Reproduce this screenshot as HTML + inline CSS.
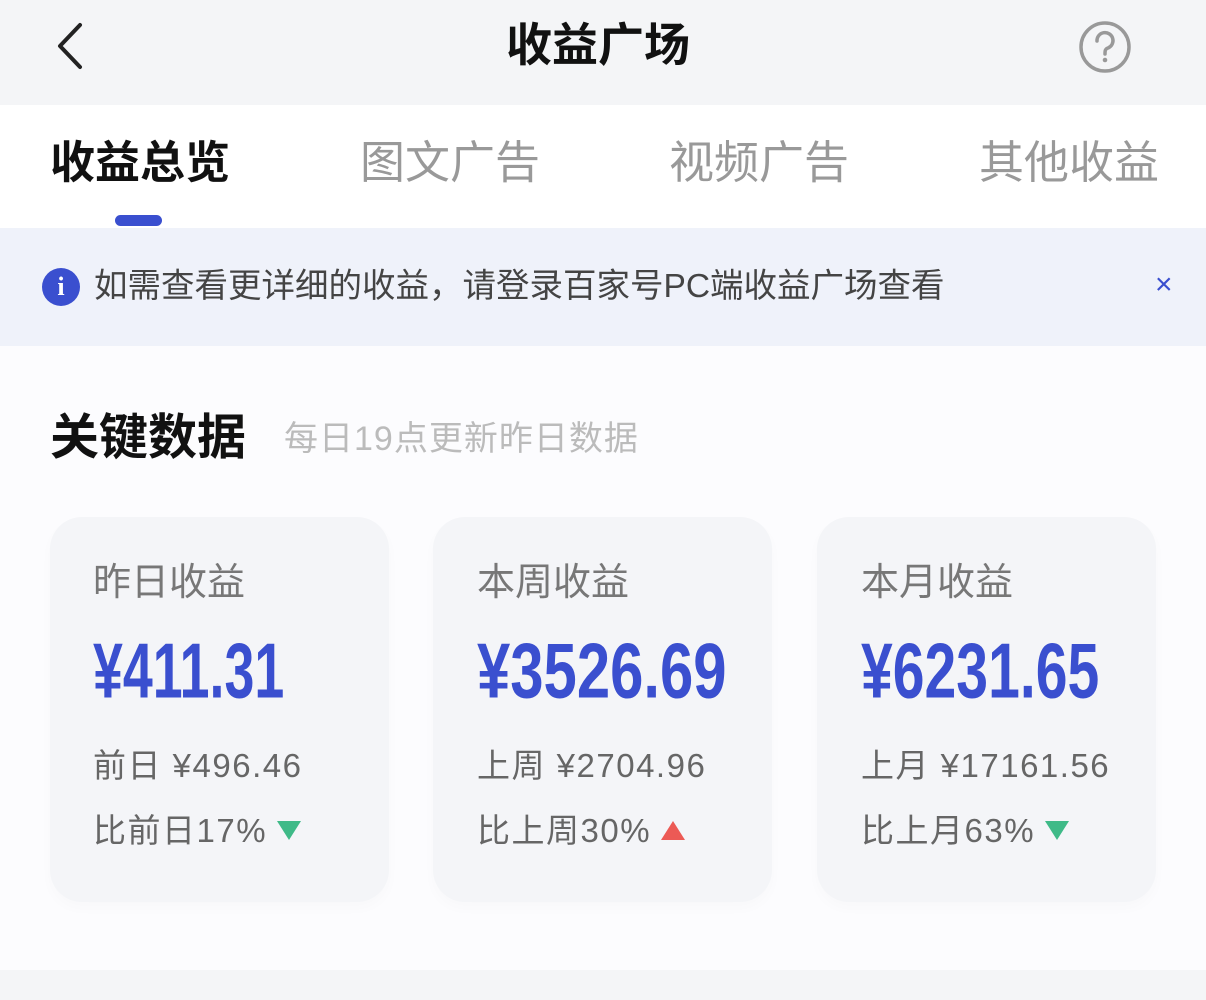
<!DOCTYPE html>
<html><head><meta charset="utf-8"><style>
*{margin:0;padding:0;box-sizing:border-box}
body{width:1206px;height:1000px;position:relative;overflow:hidden;background:#fcfcfe;font-family:"Liberation Sans","Noto Sans CJK SC",sans-serif}
.a{position:absolute;white-space:nowrap}
.hdr{left:0;top:0;width:1206px;height:105px;background:#f4f5f7}
.tabs{left:0;top:105px;width:1206px;height:123px;background:#fff}
.ban{left:0;top:228px;width:1206px;height:118px;background:#eff2fa}
.card{top:517px;width:339px;height:385px;background:#f4f5f8;border-radius:32px;box-shadow:0 6px 14px rgba(0,0,0,0.02)}
.lbl{font-size:38px;color:#777;line-height:1}
.num{font-weight:bold;font-size:68px;color:#3a4fcf;line-height:1;transform-origin:left top}
.sub{font-size:33px;color:#666;line-height:1;letter-spacing:1.5px}
.up{display:inline-block;width:0;height:0;border-left:12px solid transparent;border-right:12px solid transparent;border-bottom:19px solid #ec5a55;margin-left:10px;vertical-align:2px}
.dn{display:inline-block;width:0;height:0;border-left:12px solid transparent;border-right:12px solid transparent;border-top:19px solid #3fba88;margin-left:10px;vertical-align:2px}
</style></head><body>
<div class="a hdr"></div>
<svg class="a" style="left:52px;top:22px" width="34" height="48" viewBox="0 0 34 48"><path d="M28 3 L8 24 L28 45" fill="none" stroke="#222" stroke-width="4" stroke-linecap="round" stroke-linejoin="round"/></svg>
<div class="a" style="left:506px;top:22px;font-size:46px;font-weight:bold;color:#111;line-height:1">收益广场</div>
<svg class="a" style="left:1077px;top:19px" width="56" height="56" viewBox="0 0 56 56"><circle cx="28" cy="28" r="24" fill="none" stroke="#999" stroke-width="3.5"/><path d="M20 22 a8 8 0 1 1 11 7 c-3 1 -3 3 -3 6" fill="none" stroke="#999" stroke-width="3.5" stroke-linecap="round"/><circle cx="28" cy="41" r="2.3" fill="#999"/></svg>
<div class="a tabs"></div>
<div class="a" style="left:50px;top:140px;font-size:45px;font-weight:bold;color:#111;line-height:1">收益总览</div>
<div class="a" style="left:360px;top:140px;font-size:45px;color:#999;line-height:1">图文广告</div>
<div class="a" style="left:669px;top:140px;font-size:45px;color:#999;line-height:1">视频广告</div>
<div class="a" style="left:979px;top:140px;font-size:45px;color:#999;line-height:1">其他收益</div>
<div class="a" style="left:115px;top:215px;width:47px;height:11px;border-radius:6px;background:#3a4fcf"></div>
<div class="a ban"></div>
<div class="a" style="left:42px;top:268px;width:38px;height:38px;border-radius:50%;background:#3a4fcf;color:#fff;font-weight:bold;font-size:26px;text-align:center;line-height:38px;font-family:'Liberation Serif',serif">i</div>
<div class="a" style="left:94px;top:270px;font-size:33.5px;color:#444;line-height:1">如需查看更详细的收益，请登录百家号PC端收益广场查看</div>
<div class="a" style="left:1155px;top:270px;font-size:30px;color:#3a4fcf;line-height:1">×</div>
<div class="a" style="left:50px;top:414px;font-size:49px;font-weight:bold;color:#111;line-height:1">关键数据</div>
<div class="a" style="left:284px;top:422px;font-size:34px;color:#bbb;line-height:1;letter-spacing:1px">每日19点更新昨日数据</div>

<div class="a card" style="left:50px"></div>
<div class="a card" style="left:433px"></div>
<div class="a card" style="left:817px"></div>

<div class="a lbl" style="left:93px;top:564px">昨日收益</div>
<div class="a num" style="left:93px;top:632px;transform:scale(0.79,1.15)">¥411.31</div>
<div class="a sub" style="left:93px;top:749px">前日 ¥496.46</div>
<div class="a sub" style="left:93px;top:814px">比前日17%<span class="dn"></span></div>

<div class="a lbl" style="left:477px;top:564px">本周收益</div>
<div class="a num" style="left:477px;top:632px;transform:scale(0.88,1.15)">¥3526.69</div>
<div class="a sub" style="left:477px;top:749px">上周 ¥2704.96</div>
<div class="a sub" style="left:477px;top:814px">比上周30%<span class="up"></span></div>

<div class="a lbl" style="left:861px;top:564px">本月收益</div>
<div class="a num" style="left:861px;top:632px;transform:scale(0.84,1.15)">¥6231.65</div>
<div class="a sub" style="left:861px;top:749px">上月 ¥17161.56</div>
<div class="a sub" style="left:861px;top:814px">比上月63%<span class="dn"></span></div>

<div class="a" style="left:0;top:970px;width:1206px;height:30px;background:#f4f5f7"></div>
</body></html>
